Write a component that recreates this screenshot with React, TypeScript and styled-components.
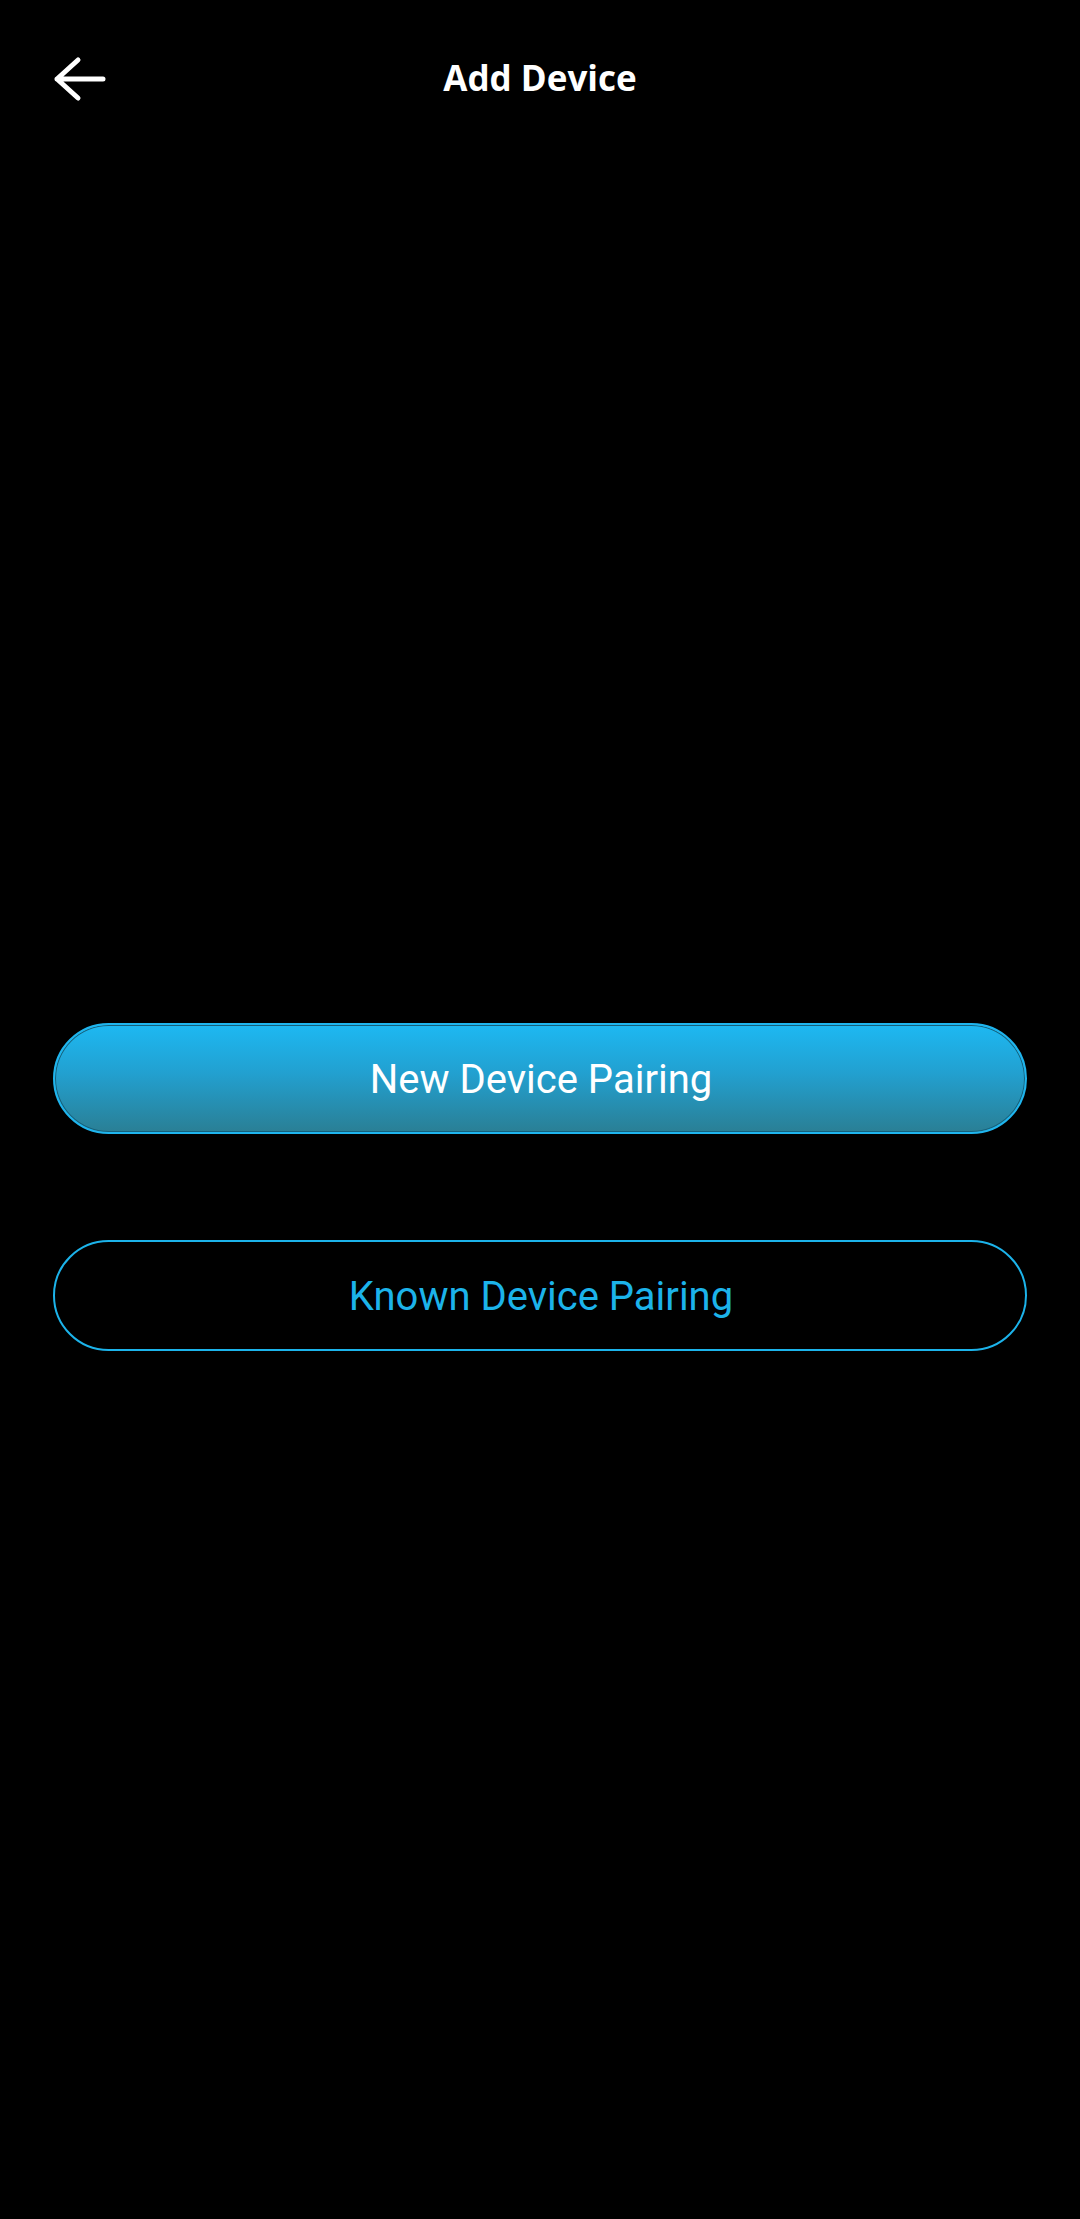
import styled, { createGlobalStyle } from 'styled-components'

const GlobalStyle = createGlobalStyle`
  html, body {
    margin: 0;
    padding: 0;
    background: #000;
  }
  * {
    box-sizing: border-box;
  }
`

const Screen = styled.div`
  min-height: 2219px;
  width: 1080px;
  background: #000;
  display: flex;
  flex-direction: column;
`

const Header = styled.header`
  height: 154px;
  display: grid;
  grid-template-columns: 1fr auto 1fr;
  align-items: center;
  padding: 0 50px;
`

const BackButton = styled.button`
  width: 60px;
  height: 50px;
  padding: 0;
  margin-top: 3px;
  border: none;
  background: transparent;
  display: flex;
  cursor: pointer;
`

const Title = styled.h1`
  margin: 0;
  font-family: 'Open Sans', 'Noto Sans', sans-serif;
  font-weight: 700;
  font-size: 35px;
  color: #fff;
  letter-spacing: 0;
`

const Actions = styled.main`
  display: flex;
  flex-direction: column;
  gap: 106px;
  padding: 869px 53px 0 53px;
`

const PillButton = styled.button<{ $filled?: boolean }>`
  height: 111px;
  width: 100%;
  border-radius: 56px;
  font-family: Roboto, 'Liberation Sans', sans-serif;
  font-size: 40px;
  font-weight: 400;
  cursor: pointer;
  display: flex;
  align-items: center;
  justify-content: center;
  padding: 2px 0 0 2px;
  color: ${(p) => (p.$filled ? '#fff' : '#1cb3ea')};
  border: 2px solid ${(p) => (p.$filled ? '#1fb5ee' : '#1cb3ea')};
  background: ${(p) =>
    p.$filled ? 'linear-gradient(180deg, #1db8f2 0%, #22a0d0 45%, #2a7f95 100%)' : '#000'};
  box-shadow: ${(p) => (p.$filled ? 'inset 0 0 0 1px #17607a' : 'none')};
`

function BackArrow() {
  return (
    <svg width="60" height="50" viewBox="0 0 60 50" fill="none">
      <path
        d="M53 25H7M28 6L7 25L28 44"
        stroke="#fff"
        strokeWidth="5"
        strokeLinecap="round"
        strokeLinejoin="round"
      />
    </svg>
  )
}

export default function App() {
  return (
    <>
      <GlobalStyle />
      <Screen>
        <Header>
          <BackButton aria-label="Back">
            <BackArrow />
          </BackButton>
          <Title>Add Device</Title>
          <span />
        </Header>
        <Actions>
          <PillButton $filled>New Device Pairing</PillButton>
          <PillButton>Known Device Pairing</PillButton>
        </Actions>
      </Screen>
    </>
  )
}
